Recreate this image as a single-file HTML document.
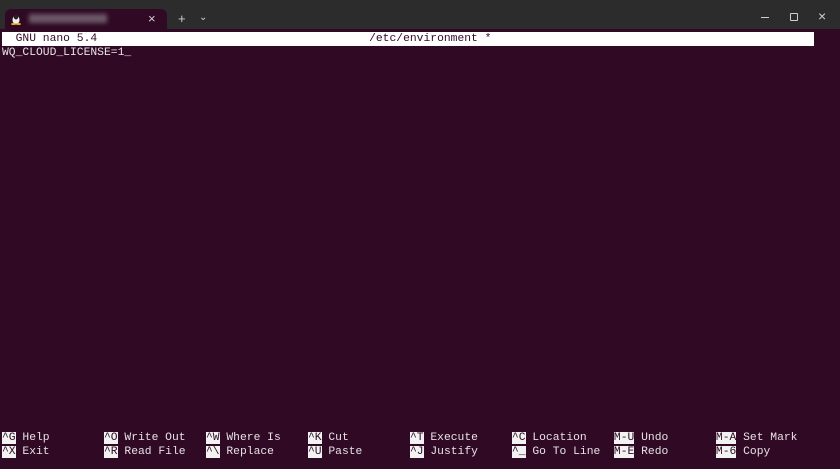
<!DOCTYPE html>
<html><head><meta charset="utf-8"><style>
*{margin:0;padding:0;box-sizing:border-box}
body{width:840px;height:469px;overflow:hidden;background:#300a24;position:relative;font-family:"Liberation Mono","DejaVu Sans Mono",monospace;font-size:11.33px;color:#e8e2e6}
.tb{position:absolute;left:0;top:0;width:840px;height:29px;background:#2c2c2c}
.tab{position:absolute;left:5px;top:9px;width:162px;height:20px;background:#300a24;border-radius:6px 6px 0 0}
.ln{position:absolute;left:2px;height:14px;line-height:14px;white-space:pre}
.hdr{position:absolute;left:2px;top:32px;width:812px;height:14px;background:#fff;color:#300a24;line-height:14px;white-space:pre}
.k{background:#f2f2f2;color:#300a24}
.ic{position:absolute;color:#cfcfcf;font-family:"Liberation Sans",sans-serif}
</style></head><body>
<div class="tb">
<div class="tab">
<svg style="position:absolute;left:6px;top:5px" width="10" height="11" viewBox="0 0 10 11"><ellipse cx="5" cy="6" rx="3.5" ry="4.5" fill="#f0f0f0"/><ellipse cx="5" cy="3" rx="2.2" ry="2.5" fill="#222"/><ellipse cx="2.5" cy="10" rx="2.5" ry="1" fill="#e8b020"/><ellipse cx="7.5" cy="10" rx="2.5" ry="1" fill="#e8b020"/></svg>
<div style="position:absolute;left:24px;top:5px;width:78px;height:9px;background:#7a6a78;filter:blur(2px);opacity:.8"></div>
<div class="ic" style="left:143px;top:2px;font-size:13px">×</div>
</div>
<div class="ic" style="left:178px;top:11px;font-size:13px">+</div>
<div class="ic" style="left:199px;top:12px;font-size:10px">⌄</div>
<div style="position:absolute;left:761px;top:17px;width:8px;height:1px;background:#cfcfcf"></div>
<div style="position:absolute;left:790px;top:13px;width:8px;height:8px;border:1.2px solid #cfcfcf;border-radius:1px"></div>
<div class="ic" style="left:818px;top:8px;font-size:14px">×</div>
</div>
<div class="hdr">  GNU nano 5.4                                        /etc/environment *</div>
<div class="ln" style="top:46px">WQ_CLOUD_LICENSE=1_</div>
<div class="ln" style="top:431px"><span class="k">^G</span> Help        <span class="k">^O</span> Write Out   <span class="k">^W</span> Where Is    <span class="k">^K</span> Cut         <span class="k">^T</span> Execute     <span class="k">^C</span> Location    <span class="k">M-U</span> Undo       <span class="k">M-A</span> Set Mark</div>
<div class="ln" style="top:445px"><span class="k">^X</span> Exit        <span class="k">^R</span> Read File   <span class="k">^\</span> Replace     <span class="k">^U</span> Paste       <span class="k">^J</span> Justify     <span class="k">^_</span> Go To Line  <span class="k">M-E</span> Redo       <span class="k">M-6</span> Copy</div>
</body></html>
